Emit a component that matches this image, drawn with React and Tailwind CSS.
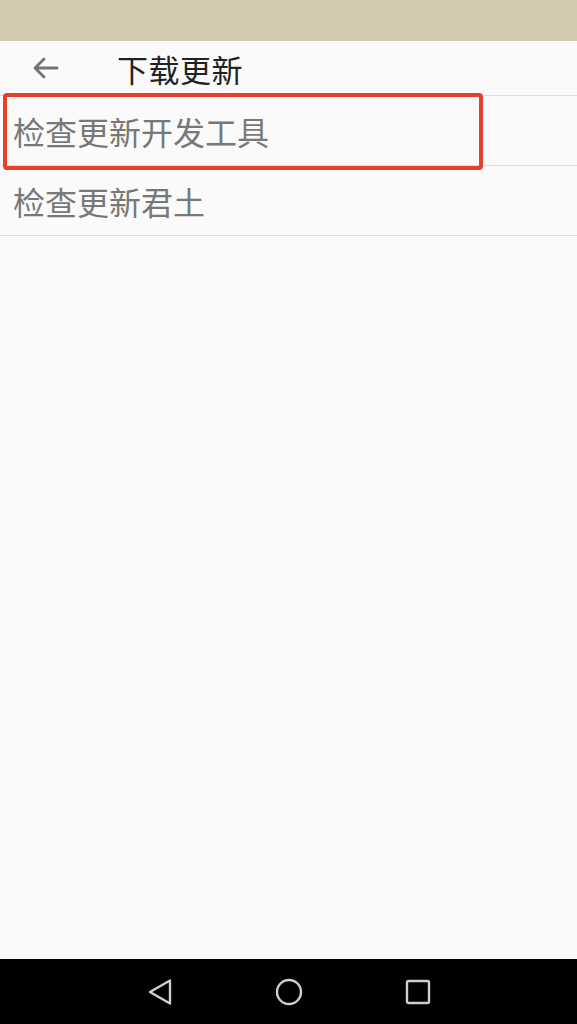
import React from 'react';

const rows = ['检查更新开发工具', '检查更新君土'];

const App = () => {
  return (
    <div
      className="relative w-[577px] h-[1024px] flex flex-col bg-[#fafafa] overflow-hidden"
      style={{ fontFamily: '"Noto Sans CJK SC", "Noto Sans", sans-serif' }}
    >
      {/* status strip */}
      <div className="h-[41px] bg-[#d3caaf] shrink-0"></div>

      {/* header */}
      <div className="h-[55px] shrink-0 flex items-center border-b border-[#dedede]">
        <svg width="26" height="24" viewBox="0 0 26 24" className="ml-[33px]" fill="none" stroke="#727272" strokeWidth="2.8" strokeLinecap="round" strokeLinejoin="round">
          <path d="M24 12H2M11 3 2 12l9 9" />
        </svg>
        <p className="ml-[58px] text-[31px] leading-none text-[#222] tracking-[0.5px]">下载更新</p>
      </div>

      {/* list */}
      {rows.map((r) => (
        <div key={r} className="h-[70px] shrink-0 flex items-center pl-[13px] border-b border-[#dedede]">
          <p className="text-[32px] leading-none text-[#787878]">{r}</p>
        </div>
      ))}

      <div className="flex-1"></div>

      {/* nav bar */}
      <div className="h-[65px] shrink-0 bg-black flex items-center justify-center gap-[102px]">
        <svg width="26" height="28" viewBox="0 0 26 28" fill="none" stroke="#cfcfcf" strokeWidth="2.4" strokeLinejoin="round">
          <path d="M23 2.5v23L3 14z" />
        </svg>
        <svg width="28" height="28" viewBox="0 0 28 28" fill="none" stroke="#cfcfcf" strokeWidth="2.4">
          <circle cx="14" cy="14" r="12" />
        </svg>
        <svg width="26" height="26" viewBox="0 0 26 26" fill="none" stroke="#cfcfcf" strokeWidth="2.4">
          <rect x="2" y="2" width="22" height="22" rx="1.5" />
        </svg>
      </div>

      {/* red highlight box */}
      <div className="absolute top-[93px] left-[3px] w-[480px] h-[77px] border-[4px] border-[#e4402b] rounded-[4px]"></div>
    </div>
  );
};

export default App;
